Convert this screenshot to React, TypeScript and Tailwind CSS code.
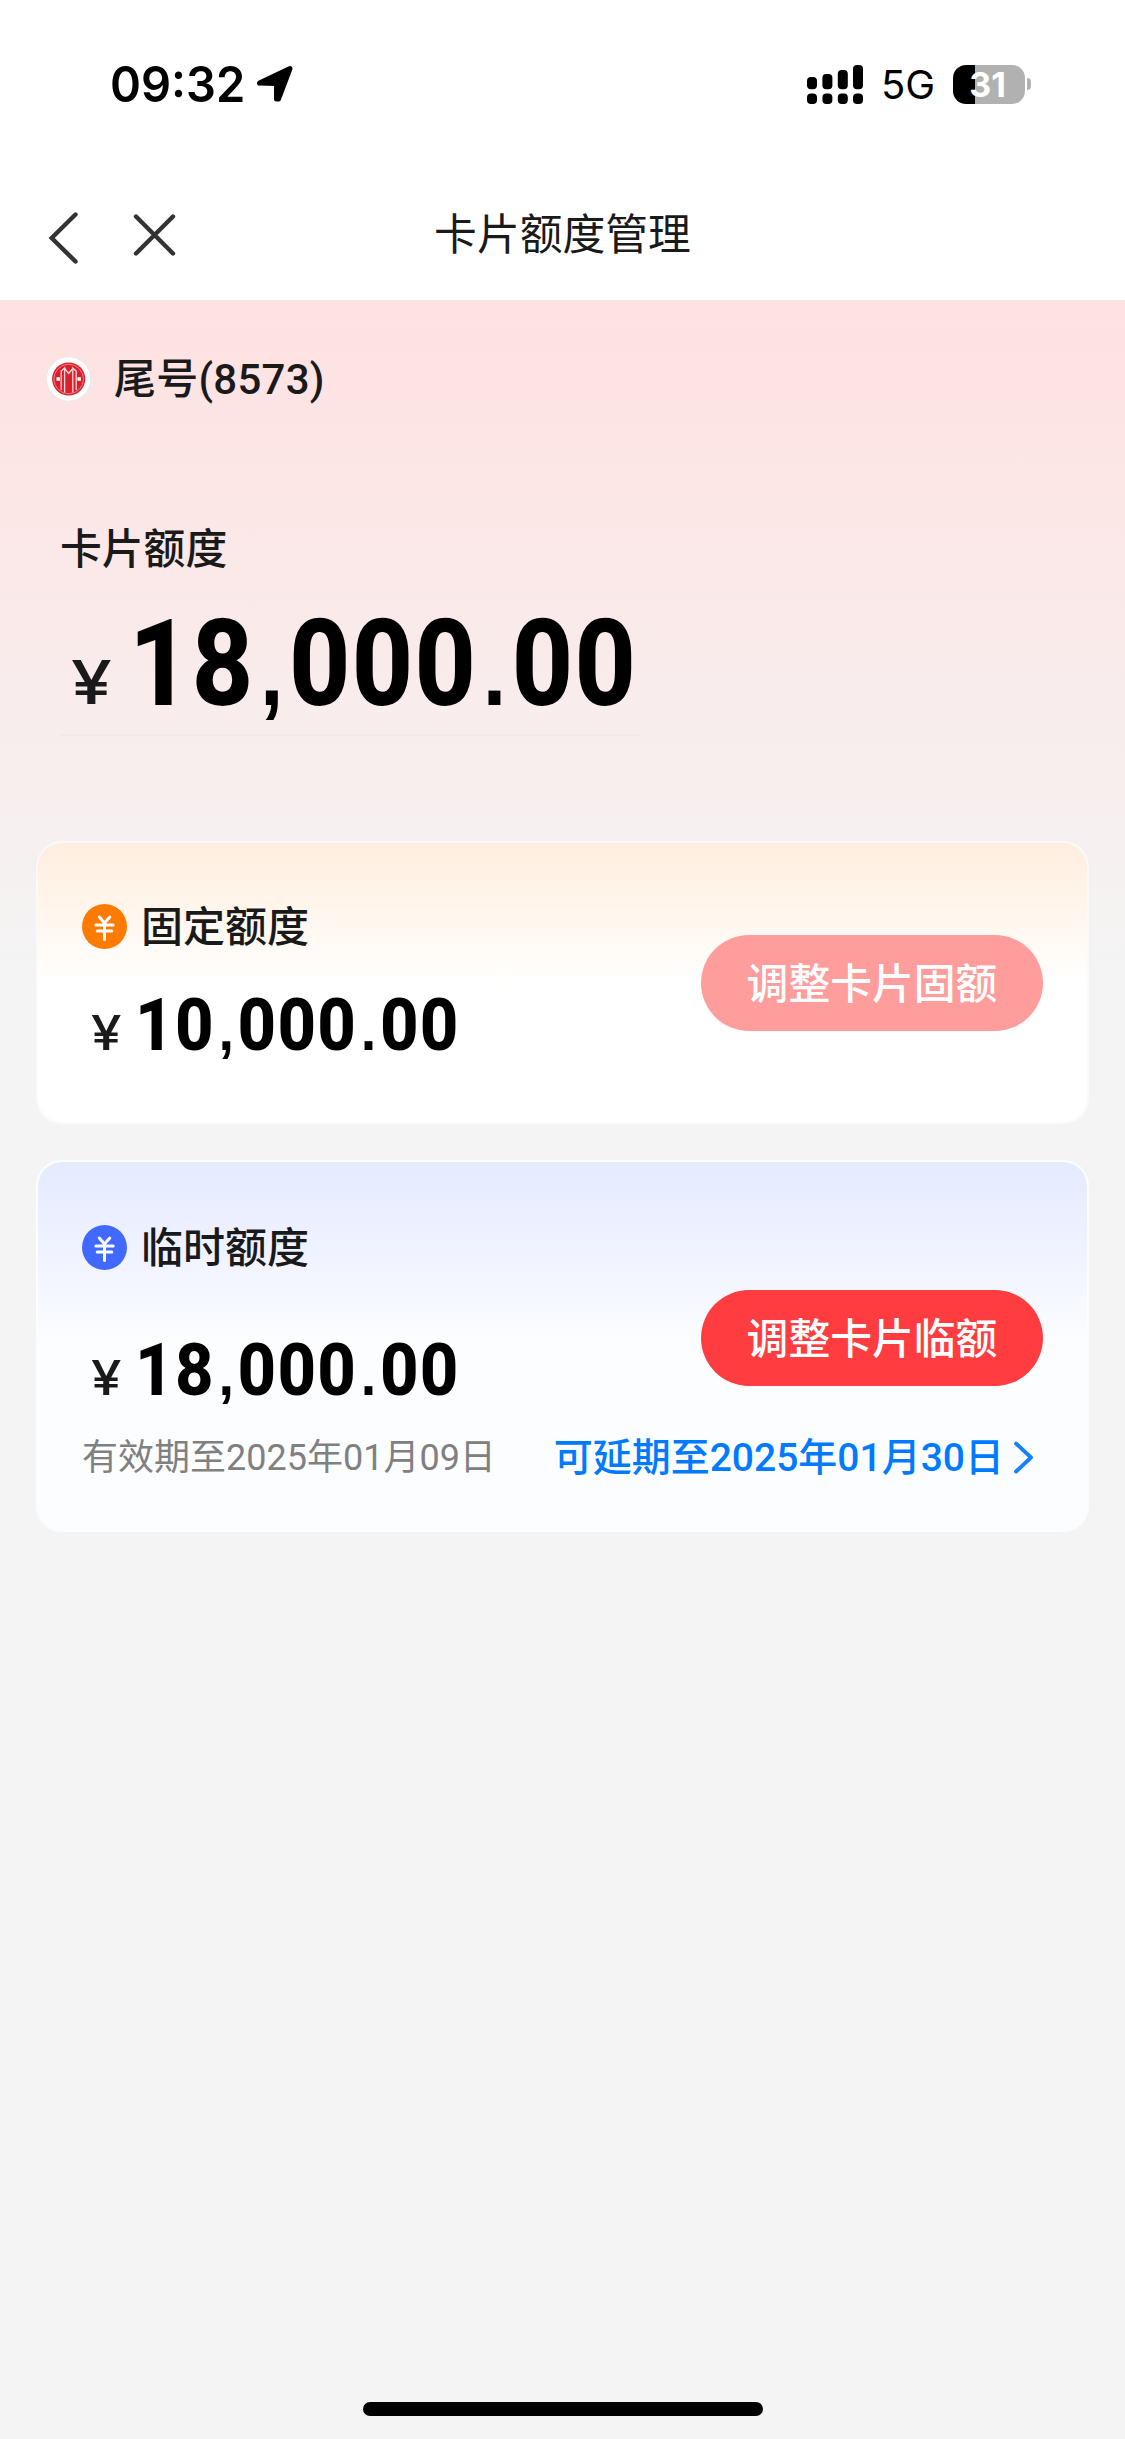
import React from "react";

function StatusBar() {
  const bars = [
    { x: 0, top: 12 },
    { x: 15.4, top: 9 },
    { x: 30.8, top: 5 },
    { x: 46, top: 0 },
  ];
  return (
    <div className="flex h-[168px] items-center pr-[93px] pl-[110px]">
      <span className="mt-px w-[146px] origin-left scale-x-[0.96] text-[49px] leading-[60px] font-[560] text-black">09:32</span>
      <svg className="mt-[2px] h-[40px] w-[40px]" viewBox="0 0 40 40">
        <path d="M3.5 18 L34 3.5 L22.5 34 L20.5 34 L20.5 18.5 Z" fill="#000" stroke="#000" strokeWidth="5" strokeLinejoin="round" />
      </svg>
      <svg className="ml-auto h-[39px] w-[57px]" viewBox="0 0 57 39">
        {bars.map((b) => (
          <g key={b.x}>
            <rect x={b.x} y={b.top} width="10" height={24.3 - b.top} rx="4" />
            <rect x={b.x} y="28.5" width="10" height="10.5" rx="4" />
          </g>
        ))}
      </svg>
      <span className="mt-[2px] ml-[17px] w-[72px] text-[40px] leading-[60px] font-normal text-black">5G</span>
      <div className="mr-px flex items-center gap-[2px]">
        <div className="flex h-[39px] w-[72px] items-center justify-center rounded-[13px] bg-[linear-gradient(to_right,#000_22px,#b1b1b1_22px)] pr-[3px] text-[34px] leading-[39px] font-bold text-white">
          31
        </div>
        <div className="h-[12px] w-[4px] rounded-r-full bg-[#b1b1b1]" />
      </div>
    </div>
  );
}

function NavBar() {
  return (
    <div className="flex h-[132px] items-center">
      <div className="flex w-[300px] items-center pl-[45px]">
        <svg className="mt-[7px] h-[60px] w-[40px]" viewBox="0 0 40 60" fill="none" stroke="#333" strokeWidth="4.4" strokeLinecap="round">
          <path d="M30.5 6.5 L6.7 30 L30.5 53.5" />
        </svg>
        <svg className="ml-[44px] mt-[2px] h-[50px] w-[50px]" viewBox="0 0 50 50" fill="none" stroke="#333" strokeWidth="4.4" strokeLinecap="round">
          <path d="M7 6.5 L44 43.5 M44 6.5 L7 43.5" />
        </svg>
      </div>
      <h1 className="mt-[2px] w-[525px] text-center text-[42.8px] leading-[60px] font-normal text-[#1a1a1a]">卡片额度管理</h1>
    </div>
  );
}

function BankLogo() {
  return (
    <svg className="h-[46px] w-[46px]" viewBox="0 0 46 46">
      <circle cx="22.7" cy="23" r="22.3" fill="#fff" stroke="#efe6e6" strokeWidth="1.2" />
      <circle cx="22.7" cy="23" r="16.6" fill="#dc1f2d" />
      <circle cx="22.7" cy="23" r="14.8" fill="none" stroke="#f09aa0" strokeWidth="0.8" />
      <g fill="none" stroke="#fbd9da" strokeWidth="1.3">
        <path d="M15.2 34 V15 L18.6 12 V36.5" />
        <path d="M30.2 34 V15 L26.8 12 V36.5" />
        <path d="M18.6 12.5 L22.7 17.5 L26.8 12.5" />
      </g>
      <path d="M10.5 21.3 h3.5 v3.5 h-3.5 z M31.4 21.3 h3.5 v3.5 h-3.5 z" fill="#fff" />
    </svg>
  );
}

function YuanBadge({ color }: { color: string }) {
  return (
    <svg className="h-[45px] w-[45px]" viewBox="0 0 45 45">
      <circle cx="22.5" cy="22.5" r="22.5" fill={color} />
      <g stroke="#fff" strokeWidth="3" strokeLinecap="round" strokeLinejoin="round" fill="none">
        <path d="M17.3 13 L22.5 19 L27.8 13 M13.8 21 H31.2 M15.2 27 H29.8 M22.5 19.5 V35.5" />
      </g>
    </svg>
  );
}

/* Digits and separators use different faces so that the separators stay square. */
function Digits({ value, separatorClass }: { value: string; separatorClass: string }) {
  return (
    <>
      {value.split(/([.,])/).map((part, i) =>
        part === "," || part === "." ? (
          <span key={i} className={separatorClass}>
            {part}
          </span>
        ) : (
          <React.Fragment key={i}>{part}</React.Fragment>
        ),
      )}
    </>
  );
}

function LimitAmount({ value }: { value: string }) {
  return (
    <div className="flex h-[72px] items-center pl-[9px]">
      <span className="mt-[14px] w-[44px] origin-left scale-x-[1.14] text-[48px] leading-[60px] font-medium text-[#1a1a1a]">¥</span>
      <span className="origin-left scale-x-[0.93] font-['Roboto'] text-[72px] leading-[72px] font-extrabold tracking-[1.4px] text-black">
        <Digits
          value={value}
          separatorClass="inline-block w-[24.4px] text-center font-['Liberation_Sans'] text-[60px] leading-none font-bold tracking-normal"
        />
      </span>
    </div>
  );
}

export default function App() {
  return (
    <div className="flex h-[2439px] w-[1125px] flex-col overflow-hidden bg-[#f4f4f4] font-['Inter','Noto_Sans_CJK_SC',sans-serif] whitespace-nowrap">
      <header className="h-[300px] bg-white">
        <StatusBar />
        <NavBar />
      </header>

      <main className="flex flex-1 flex-col bg-[linear-gradient(to_bottom,#ffe1e1_0,#f4f4f4_680px)] px-[36px]">
        <div className="mt-[49px] flex h-[60px] items-center pl-[10px]">
          <BankLogo />
          <span className="mt-px ml-[22px] font-['Roboto','Noto_Sans_CJK_SC',sans-serif] text-[42px] leading-[60px] font-medium tracking-[0.25px] text-[#1a1a1a]">
            尾号(8573)
          </span>
        </div>

        <section className="mt-[110px] w-[605px] pl-[24px]">
          <h2 className="text-[41.8px] leading-[60px] font-medium text-[#1a1a1a]">卡片额度</h2>
          <div className="mt-[25px] flex h-[120px] items-center">
            <span className="mt-[36px] ml-[11px] w-[58px] shrink-0 origin-left scale-x-[1.2] text-[61px] leading-[70px] font-medium text-[#1a1a1a]">¥</span>
            <span className="origin-left scale-x-[0.88] font-['Roboto'] text-[121px] leading-[120px] font-extrabold tracking-[1.5px] text-black">
              <Digits
                value="18,000.00"
                separatorClass="inline-block w-[39.3px] text-center font-['Liberation_Sans'] text-[96px] leading-none font-bold tracking-normal"
              />
            </span>
          </div>
          <div className="mt-[10px] h-[2px] w-[581px] bg-[#f5e8e8]" />
        </section>

        <section className="mt-[105px] flex h-[283px] items-center justify-between rounded-[26px] border-2 border-white/60 bg-[linear-gradient(to_bottom,#ffeee0_0,#fff5ea_60px,#fff_140px)] bg-clip-padding pr-[44px] pl-[44px]">
          <div className="flex h-full flex-col pt-[53px]">
            <div className="flex h-[60px] items-center gap-[14px]">
              <YuanBadge color="#ff7a00" />
              <h3 className="mt-[2px] text-[42px] leading-[60px] font-medium text-[#1a1a1a]">固定额度</h3>
            </div>
            <div className="mt-[34px]">
              <LimitAmount value="10,000.00" />
            </div>
          </div>
          <button className="h-[96px] w-[342px] rounded-full bg-[#ff9c9c] pt-[2px] text-[41.8px] leading-[94px] font-medium text-white">调整卡片固额</button>
        </section>

        <section className="mt-[36px] h-[372px] rounded-[26px] border-2 border-white/80 bg-[linear-gradient(to_bottom,#e5eaff_0,#eff2ff_85px,#fcfdff_180px)] bg-clip-padding pr-[44px] pl-[44px]">
          <div className="flex justify-between">
            <div className="flex flex-col pt-[55px]">
              <div className="flex h-[60px] items-center gap-[14px]">
                <YuanBadge color="#4168ff" />
                <h3 className="mt-[2px] text-[42px] leading-[60px] font-medium text-[#1a1a1a]">临时额度</h3>
              </div>
              <div className="mt-[58px]">
                <LimitAmount value="18,000.00" />
              </div>
            </div>
            <button className="mt-[128px] h-[96px] w-[342px] rounded-full bg-[#ff3d40] pt-[2px] text-[41.8px] leading-[94px] font-medium text-white">调整卡片临额</button>
          </div>
          <div className="mt-[21px] flex h-[60px] items-center font-['Roboto','Noto_Sans_CJK_SC',sans-serif]">
            <span className="text-[36px] leading-[60px] font-normal text-[#808080]">有效期至2025年01月09日</span>
            <a className="ml-auto flex items-center text-[#007aff]">
              <span className="text-[39px] leading-[60px] font-medium">可延期至2025年01月30日</span>
              <svg className="mr-[8px] ml-[7px] h-[36px] w-[24px]" viewBox="0 0 24 36" fill="none" stroke="#1482ff" strokeWidth="3.8" strokeLinecap="round" strokeLinejoin="round">
                <path d="M5 3.5 L20 17.5 L5 31.5" />
              </svg>
            </a>
          </div>
        </section>

        <div className="mt-auto mb-[23px] flex justify-center">
          <div className="h-[14px] w-[400px] rounded-full bg-black" />
        </div>
      </main>
    </div>
  );
}
